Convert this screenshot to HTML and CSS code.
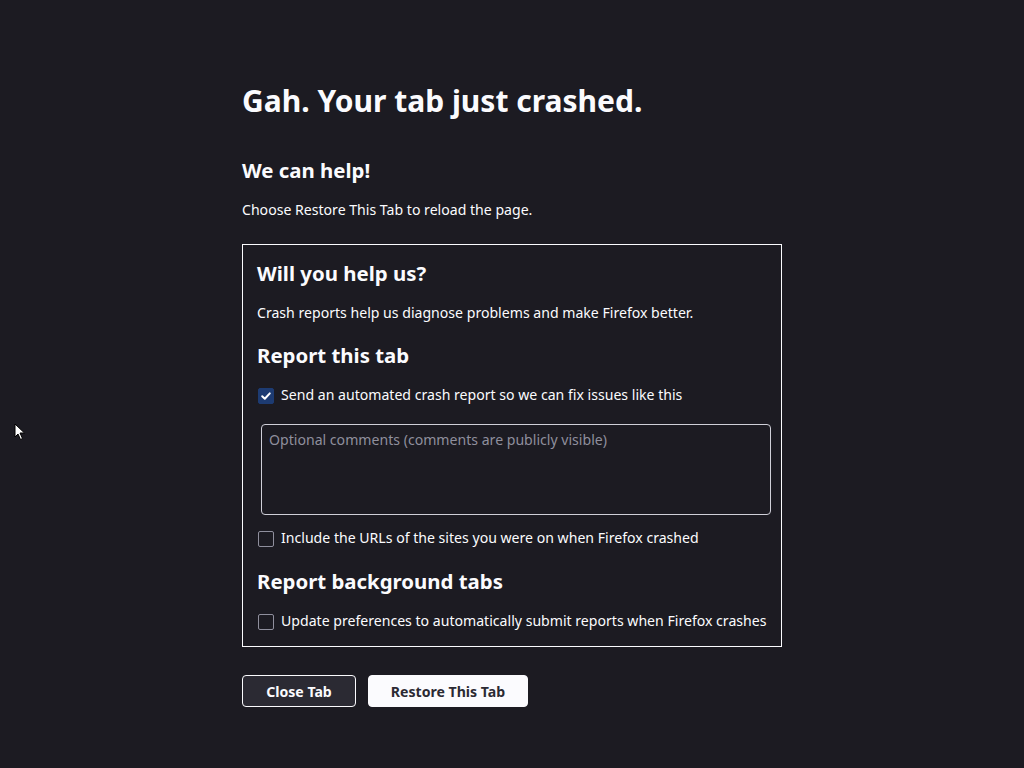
FILE: index.html
```html
<!DOCTYPE html>
<html lang="en">
<head>
<meta charset="utf-8">
<title>Tab crashed</title>
<link rel="stylesheet" href="styles.css">
</head>
<body>
<div class="cursor"><svg width="12" height="18" viewBox="0 0 12 18"><path d="M1 1 L1 14 L4 11 L6.5 16.5 L8.5 15.5 L6 10 L10.5 10 Z" fill="#fff" stroke="#000" stroke-width="1"/></svg></div>
<main class="page">
  <h1 class="title">Gah. Your tab just crashed.</h1>
  <h2 class="subtitle">We can help!</h2>
  <p class="text intro">Choose Restore This Tab to reload the page.</p>
  <section class="box">
    <h2 class="box-title">Will you help us?</h2>
    <p class="text desc">Crash reports help us diagnose problems and make Firefox better.</p>
    <h2 class="box-heading">Report this tab</h2>
    <label class="check-row first">
      <span class="check checked"><svg width="12" height="12" viewBox="0 0 12 12"><path d="M2.2 6.2 L4.8 8.8 L9.8 3.4" fill="none" stroke="#fff" stroke-width="2" stroke-linecap="round" stroke-linejoin="round"/></svg></span>
      <span>Send an automated crash report so we can fix issues like this</span>
    </label>
    <div class="comments">Optional comments (comments are publicly visible)</div>
    <label class="check-row urls">
      <span class="check"></span>
      <span>Include the URLs of the sites you were on when Firefox crashed</span>
    </label>
    <h2 class="box-heading">Report background tabs</h2>
    <label class="check-row last">
      <span class="check"></span>
      <span>Update preferences to automatically submit reports when Firefox crashes</span>
    </label>
  </section>
  <div class="buttons">
    <button class="btn btn-secondary">Close Tab</button>
    <button class="btn btn-primary">Restore This Tab</button>
  </div>
</main>
</body>
</html>
```
FILE: styles.css
```css
html, body {
  margin: 0;
  padding: 0;
  background: #1c1b22;
  color: #fbfbfe;
  font-family: "Noto Sans", "Open Sans", sans-serif;
  height: 100%;
}
body { position: relative; }
.cursor {
  position: absolute;
  left: 14px;
  top: 423px;
}
.page {
  width: 540px;
  margin-left: 242px;
  padding-top: 81px;
}
.title {
  font-size: 30px;
  font-weight: 700;
  margin: 0;
  line-height: 40px;
}
.subtitle {
  font-size: 20.4px;
  font-weight: 700;
  margin: 35px 0 0;
  line-height: 28px;
}
.text {
  font-size: 14.1px;
  margin: 0;
  line-height: 20px;
}
.intro { margin-top: 16px; }
.box {
  margin-top: 24px;
  border: 1px solid #fbfbfe;
  padding: 14px 10px 14px 14px;
}
.box-title {
  font-size: 20.4px;
  font-weight: 700;
  margin: 0;
  line-height: 28px;
}
.desc { margin-top: 16px; }
.box-heading {
  font-size: 20.4px;
  font-weight: 700;
  margin: 18px 0 0;
  line-height: 28px;
}
.check-row {
  display: flex;
  align-items: center;
  gap: 7px;
  font-size: 14.1px;
  line-height: 22px;
  white-space: nowrap;
}
.check-row.first { margin-top: 15px; }
.check-row.urls { margin-top: 12px; }
.check-row.last { margin-top: 15px; }
.check {
  width: 14px;
  height: 14px;
  border: 1px solid #8f8f9d;
  border-radius: 2px;
  display: flex;
  align-items: center;
  justify-content: center;
  margin-left: 1px;
  margin-top: 2px;
  flex-shrink: 0;
}
.check.checked {
  background: #1d3b72;
  border-color: #1d3b72;
}
.comments {
  margin: 18px 0 0 4px;
  height: 91px;
  border: 1px solid #cfcfd8;
  border-radius: 4px;
  padding: 4px 7px;
  box-sizing: border-box;
  font-size: 14.1px;
  line-height: 22px;
  color: #8f8f9d;
}
.buttons {
  display: flex;
  gap: 12px;
  margin-top: 28px;
}
.btn {
  font-family: inherit;
  font-size: 14.1px;
  font-weight: 700;
  height: 32px;
  border-radius: 4px;
  padding: 0;
  white-space: nowrap;
  cursor: pointer;
}
.btn-secondary {
  background: #2b2a33;
  color: #fbfbfe;
  border: 1px solid #fbfbfe;
  width: 114px;
}
.btn-primary {
  background: #fbfbfe;
  color: #2b2a33;
  border: 1px solid #fbfbfe;
  width: 160px;
}
```
